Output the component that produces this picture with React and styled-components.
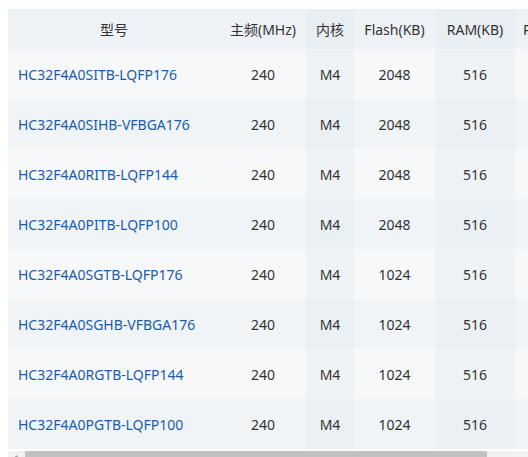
import React from "react";
import styled, { createGlobalStyle } from "styled-components";

const Global = createGlobalStyle`
  html, body { margin: 0; padding: 0; overflow: hidden; background: #fff; }
  body { padding: 9px 0 0 8px; font-family: "Noto Sans", "Noto Sans CJK SC", sans-serif; }
`;

const Wrap = styled.div`
  width: 520px;
  overflow: hidden;
`;

const Table = styled.table`
  border-collapse: collapse;
  table-layout: fixed;
  width: 627px;
  font-size: 14px;
  color: #333;
`;

const cols = [212, 86, 48, 81, 80, 120];

const Th = styled.th`
  height: 40px;
  padding: 0 ${(p) => (p.$start ? "8px" : "0")};
  font-weight: normal;
  text-align: ${(p) => (p.$start ? "left" : "center")};
  white-space: nowrap;
  background: ${(p) => (p.$alt ? "#e9eef3" : "#eef2f6")};
`;

const Td = styled.td`
  height: 50px;
  padding: 0 ${(p) => (p.$left ? "10px" : "0")};
  text-align: ${(p) => (p.$left ? "left" : "center")};
  white-space: nowrap;
  background: ${(p) =>
    p.$even
      ? p.$alt
        ? "#ebf0f4"
        : "#f0f4f7"
      : p.$alt
      ? "#eff3f6"
      : "#f6f8fa"};
`;

const Link = styled.a`
  color: #1a5cab;
  text-decoration: none;
`;

const Scrollbar = styled.div`
  margin-top: 2px;
  height: 15px;
  width: 520px;
  display: flex;
  background: #f1f1f1;
`;

const ArrowBtn = styled.div`
  width: 17px;
  display: flex;
  justify-content: center;
  padding-top: 4px;
  box-sizing: border-box;
`;

const Thumb = styled.div`
  width: 462px;
  background: #c1c1c1;
`;

const rows = [
  ["HC32F4A0SITB-LQFP176", "2048"],
  ["HC32F4A0SIHB-VFBGA176", "2048"],
  ["HC32F4A0RITB-LQFP144", "2048"],
  ["HC32F4A0PITB-LQFP100", "2048"],
  ["HC32F4A0SGTB-LQFP176", "1024"],
  ["HC32F4A0SGHB-VFBGA176", "1024"],
  ["HC32F4A0RGTB-LQFP144", "1024"],
  ["HC32F4A0PGTB-LQFP100", "1024"],
];

const headers = ["型号", "主频(MHz)", "内核", "Flash(KB)", "RAM(KB)", "Package"];

export default function App() {
  return (
    <>
      <Global />
      <Wrap>
        <Table>
          <colgroup>
            {cols.map((w, i) => (
              <col key={i} style={{ width: w }} />
            ))}
          </colgroup>
          <thead>
            <tr>
              {headers.map((h, i) => (
                <Th key={i} $alt={i === 2 || i === 4} $start={i === 5}>
                  {h}
                </Th>
              ))}
            </tr>
          </thead>
          <tbody>
            {rows.map(([name, flash], r) => {
              const even = r % 2 === 1;
              return (
                <tr key={name}>
                  <Td $left $even={even}>
                    <Link href="#">{name}</Link>
                  </Td>
                  <Td $even={even}>240</Td>
                  <Td $even={even} $alt>M4</Td>
                  <Td $even={even}>{flash}</Td>
                  <Td $even={even} $alt>516</Td>
                  <Td $even={even}>{name.split("-")[1]}</Td>
                </tr>
              );
            })}
          </tbody>
        </Table>
      </Wrap>
      <Scrollbar>
        <ArrowBtn>
          <svg width="7" height="4" viewBox="0 0 7 4">
            <path d="M0 4 L3.5 0 L7 4 Z" fill="#a3a3a3" />
          </svg>
        </ArrowBtn>
        <Thumb />
      </Scrollbar>
    </>
  );
}
